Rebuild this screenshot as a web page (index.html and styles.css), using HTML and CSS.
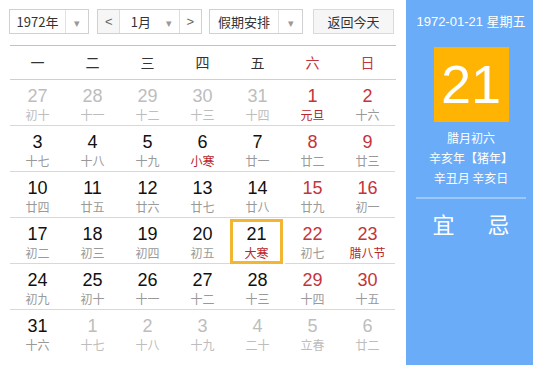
FILE: index.html
```html
<!DOCTYPE html>
<html lang="zh-CN">
<head>
    <meta charset="UTF-8">
    <title>万年历</title>
    <link rel="stylesheet" href="styles.css">
</head>
<body>
    <div class="calendar">
        <!-- Left: month grid -->
        <div class="main">
            <div class="toolbar">
                <div class="select year-select">
                    <span class="select-text">1972年</span>
                    <span class="select-arrow">▾</span>
                </div>
                <div class="month-group">
                    <span class="nav-btn">&lt;</span>
                    <span class="month-text">1月</span>
                    <span class="month-arrow">▾</span>
                    <span class="nav-btn next">&gt;</span>
                </div>
                <div class="select holiday-select">
                    <span class="select-text">假期安排</span>
                    <span class="select-arrow">▾</span>
                </div>
                <div class="today-btn">返回今天</div>
            </div>

            <div class="weekdays">
                <span>一</span><span>二</span><span>三</span><span>四</span><span>五</span>
                <span class="weekend">六</span><span class="weekend">日</span>
            </div>

            <div class="days">
                <div class="day other"><b>27</b><i>初十</i></div>
                <div class="day other"><b>28</b><i>十一</i></div>
                <div class="day other"><b>29</b><i>十二</i></div>
                <div class="day other"><b>30</b><i>十三</i></div>
                <div class="day other"><b>31</b><i>十四</i></div>
                <div class="day weekend festival"><b>1</b><i>元旦</i></div>
                <div class="day weekend"><b>2</b><i>十六</i></div>

                <div class="day"><b>3</b><i>十七</i></div>
                <div class="day"><b>4</b><i>十八</i></div>
                <div class="day"><b>5</b><i>十九</i></div>
                <div class="day festival"><b>6</b><i>小寒</i></div>
                <div class="day"><b>7</b><i>廿一</i></div>
                <div class="day weekend"><b>8</b><i>廿二</i></div>
                <div class="day weekend"><b>9</b><i>廿三</i></div>

                <div class="day"><b>10</b><i>廿四</i></div>
                <div class="day"><b>11</b><i>廿五</i></div>
                <div class="day"><b>12</b><i>廿六</i></div>
                <div class="day"><b>13</b><i>廿七</i></div>
                <div class="day"><b>14</b><i>廿八</i></div>
                <div class="day weekend"><b>15</b><i>廿九</i></div>
                <div class="day weekend"><b>16</b><i>初一</i></div>

                <div class="day"><b>17</b><i>初二</i></div>
                <div class="day"><b>18</b><i>初三</i></div>
                <div class="day"><b>19</b><i>初四</i></div>
                <div class="day"><b>20</b><i>初五</i></div>
                <div class="day festival selected"><b>21</b><i>大寒</i></div>
                <div class="day weekend"><b>22</b><i>初七</i></div>
                <div class="day weekend festival"><b>23</b><i>腊八节</i></div>

                <div class="day"><b>24</b><i>初九</i></div>
                <div class="day"><b>25</b><i>初十</i></div>
                <div class="day"><b>26</b><i>十一</i></div>
                <div class="day"><b>27</b><i>十二</i></div>
                <div class="day"><b>28</b><i>十三</i></div>
                <div class="day weekend"><b>29</b><i>十四</i></div>
                <div class="day weekend"><b>30</b><i>十五</i></div>

                <div class="day last"><b>31</b><i>十六</i></div>
                <div class="day last other"><b>1</b><i>十七</i></div>
                <div class="day last other"><b>2</b><i>十八</i></div>
                <div class="day last other"><b>3</b><i>十九</i></div>
                <div class="day last other"><b>4</b><i>二十</i></div>
                <div class="day last other"><b>5</b><i>立春</i></div>
                <div class="day last other"><b>6</b><i>廿二</i></div>
            </div>
        </div>

        <!-- Right: selected day details -->
        <div class="side">
            <div class="side-date">1972-01-21 星期五</div>
            <div class="side-day">21</div>
            <div class="side-lunar">
                <p>腊月初六</p>
                <p>辛亥年【猪年】</p>
                <p>辛丑月 辛亥日</p>
            </div>
            <div class="side-yiji">
                <span>宜</span>
                <span>忌</span>
            </div>
        </div>
    </div>
</body>
</html>
```

FILE: styles.css
```css
/* General Page Styling */
body {
    margin: 0;
    padding: 0;
    background: #fff;
    font-family: "Liberation Sans", Arial, "Noto Sans CJK SC", sans-serif;
    color: #333;
}

.calendar {
    display: flex;
    width: 533px;
    height: 365px;
    overflow: hidden;
}

/* Left part */
.main {
    width: 386px;
    padding: 0 10px;
}

/* Toolbar */
.toolbar {
    display: flex;
    align-items: center;
    height: 25px;
    padding-top: 9px;
    margin-bottom: 11px;
    margin-left: -1px;
    font-size: 13px;
    font-family: "Noto Sans CJK SC", "Liberation Sans", sans-serif;
    color: #333;
}

.select,
.month-group,
.today-btn {
    box-sizing: border-box;
    height: 25px;
    border: 1px solid #d0d0d0;
    display: flex;
    align-items: center;
    background: #fff;
}

.select-text {
    flex: 1;
    text-align: center;
    border-right: 1px solid #e2e2e2;
    height: 100%;
    line-height: 23px;
}

.select-arrow,
.month-arrow {
    width: 22px;
    text-align: center;
    color: #999;
    font-size: 11px;
}

.year-select {
    width: 80px;
}

.month-group {
    width: 105px;
    margin-left: 8px;
}

.nav-btn {
    width: 22px;
    height: 100%;
    line-height: 23px;
    text-align: center;
    color: #666;
    background: #f6f6f6;
    border-right: 1px solid #ddd;
    font-family: "Liberation Sans", sans-serif;
}

.nav-btn.next {
    border-right: none;
    border-left: 1px solid #ddd;
    background: #fff;
}

.month-text {
    width: 38px;
    text-align: center;
    padding-left: 2px;
}

.month-arrow {
    width: 20px;
}

.holiday-select {
    width: 94px;
    margin-left: 7px;
}

.holiday-select .select-arrow {
    width: 23px;
}

.today-btn {
    width: 81px;
    margin-left: 10px;
    justify-content: center;
    background: #f6f6f6;
    border-color: #dadada;
}

/* Week header */
.weekdays {
    display: grid;
    grid-template-columns: repeat(7, 55px);
    height: 33px;
    border-top: 1px solid #a7c9e2;
    border-bottom: 1px solid #cfcfcf;
    font-family: "Noto Sans CJK SC", sans-serif;
    font-size: 14px;
    color: #333;
}

.weekdays span {
    text-align: center;
    line-height: 33px;
}

.weekdays .weekend {
    color: #c4343a;
}

/* Day cells */
.days {
    display: grid;
    grid-template-columns: repeat(7, 55px);
    grid-auto-rows: 46px;
}

.day {
    box-sizing: border-box;
    display: flex;
    flex-direction: column;
    align-items: center;
    padding-top: 6px;
    border-bottom: 1px solid #d8d8d8;
}

.day.last {
    border-bottom: none;
}

.day b {
    font-weight: normal;
    font-size: 18px;
    line-height: 20px;
    color: #111;
}

.day i {
    font-style: normal;
    font-family: "Noto Sans CJK SC", sans-serif;
    font-size: 12px;
    line-height: 18px;
    color: #999;
}

.day.weekend b {
    color: #c4343a;
}

.day.festival i {
    color: #b8262a;
}

.day.other b,
.day.other i {
    color: #bdbdbd;
}

.day.selected {
    outline: 3px solid #f2b632;
    outline-offset: -3px;
    margin: 1px 2px 0 0;
    padding-top: 5px;
}

/* Right panel */
.side {
    flex: 1;
    background: #6aacf8;
    color: #fff;
    display: flex;
    flex-direction: column;
    align-items: center;
    padding: 0 7px 0 10px;
}

.side-date {
    margin-top: 14px;
    font-size: 13px;
    line-height: 16px;
    font-family: "Liberation Sans", "Noto Sans CJK SC", sans-serif;
}

.side-day {
    margin-top: 17px;
    width: 75px;
    height: 75px;
    background: #ffb302;
    font-size: 54px;
    line-height: 75px;
    text-align: center;
}

.side-lunar {
    margin-top: 6px;
    font-family: "Noto Sans CJK SC", sans-serif;
    font-size: 12px;
    text-align: center;
    width: 100%;
    border-bottom: 2px solid #9cc9fb;
    padding-bottom: 9px;
}

.side-lunar p {
    margin: 0;
    line-height: 20px;
}

.side-yiji {
    display: flex;
    width: 100%;
    margin-top: 8px;
    font-family: "Noto Sans CJK SC", sans-serif;
    font-size: 22px;
}

.side-yiji span {
    flex: 1;
    text-align: center;
}
```
